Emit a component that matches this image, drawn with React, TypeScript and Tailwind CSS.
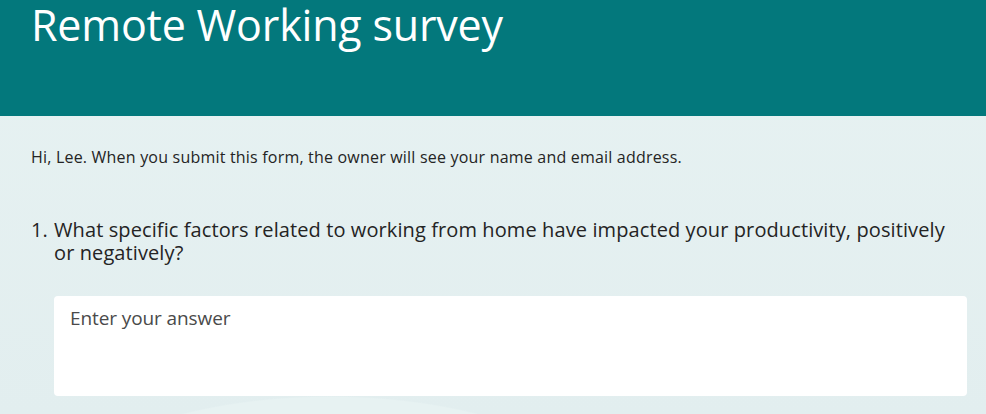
import React from "react";

export default function App() {
  return (
    <div className="w-[986px] h-[414px] overflow-hidden bg-[radial-gradient(ellipse_300px_134px_at_330px_530px,#e7f2f2_99%,transparent_100%),linear-gradient(180deg,#e7f2f2_0%,#e2eeef_100%)] font-['Open_Sans',sans-serif] text-[#242424]">
      <header className="h-[116px] bg-[#03787c] pl-[31px] pt-0">
        <h1 className="text-[43px] leading-[50px] text-white tracking-[-0.2px]">
          Remote Working survey
        </h1>
      </header>
      <main className="pl-[31px] pr-[19px]">
        <p className="mt-[31px] text-[16px] leading-[20px] tracking-[0.2px] text-[#242424]">
          Hi, Lee. When you submit this form, the owner will see your name and email address.
        </p>
        <div className="mt-[51px] flex text-[20px] leading-[23px] tracking-[0.1px] text-[#242424]">
          <span className="w-[23px] shrink-0">1.</span>
          <span className="w-[900px]">
            What specific factors related to working from home have impacted your productivity, positively or negatively?
          </span>
        </div>
        <div className="mt-[32px] ml-[23px] w-[913px] h-[100px] bg-white rounded-[4px] px-[16px] pt-[10px]">
          <textarea
            className="w-full h-full resize-none border-0 outline-none bg-transparent text-[19px] leading-[24px] tracking-[-0.1px] text-[#242424] placeholder:text-[#4a4a4a] font-['Open_Sans',sans-serif]"
            placeholder="Enter your answer"
          />
        </div>
      </main>
    </div>
  );
}
